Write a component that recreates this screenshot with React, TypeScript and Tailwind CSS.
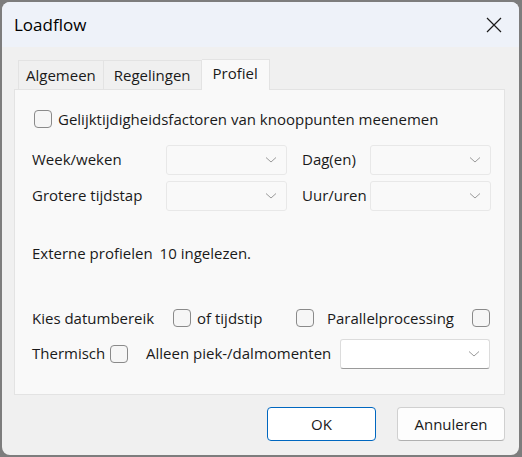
function Chevron() {
  return (
    <svg width="12" height="8" viewBox="0 0 12 8" className="text-[#9a9a9a]">
      <path d="M1 1.5 L6 6 L11 1.5" fill="none" stroke="currentColor" strokeWidth="1" />
    </svg>
  );
}

function Select({ w, white }: { w: string; white?: boolean }) {
  return (
    <div
      className={`${w} h-[30px] flex items-center justify-end pr-[9px] rounded-[3px] border ${
        white ? "bg-white border-[#dcdcdc] border-b-[#9a9a9a]" : "bg-[#f9f9f9] border-[#e8e8e8]"
      }`}
    >
      <Chevron />
    </div>
  );
}

function Box() {
  return <div className="w-[18px] h-[18px] rounded-[4px] border border-[#8a8a8a] bg-[#f6f6f6] shrink-0" />;
}

export default function App() {
  return (
    <div className="w-[522px] h-[457px] bg-[#7d7d7d] p-[2px] text-[15px] text-[#1a1a1a] font-['Segoe_UI','Open_Sans',sans-serif]">
      <div className="w-[517px] h-[453px] rounded-[8px] overflow-hidden bg-[#f0f0f0] flex flex-col">
        <div className="h-[45px] bg-[#eef2f9] flex items-center justify-between pl-[12px] pr-[17px]">
          <span className="text-[17px] text-black">Loadflow</span>
          <svg width="16" height="16" viewBox="0 0 16 16">
            <path d="M1 1 L15 15 M15 1 L1 15" stroke="#1a1a1a" strokeWidth="1.2" />
          </svg>
        </div>

        <div className="pl-[12px] pt-[12px] flex items-end">
          <div className="ml-[4px] h-[29px] px-[7px] flex items-center border border-b-0 border-[#e3e3e3] bg-[#f0f0f0]">Algemeen</div>
          <div className="h-[29px] px-[10px] flex items-center border border-b-0 border-l-0 border-[#e3e3e3] bg-[#f0f0f0]">Regelingen</div>
          <div className="h-[31px] px-[11px] pb-[3px] flex items-center border border-b-0 border-l-0 border-[#e3e3e3] bg-[#f9f9f9] -mb-px relative z-10">Profiel</div>
        </div>

        <div className="ml-[12px] w-[491px] h-[306px] border border-[#e3e3e3] bg-[#f9f9f9] pl-[17px] pt-[18px]">
          <div className="flex items-center gap-[6px] ml-[2px]">
            <Box />
            <span>Gelijktijdigheidsfactoren van knooppunten meenemen</span>
          </div>

          <div className="mt-[14px] flex items-center">
            <span className="w-[134px]">Week/weken</span>
            <Select w="w-[121px]" />
            <span className="ml-[15px] w-[68px]">Dag(en)</span>
            <Select w="w-[121px]" />
          </div>
          <div className="mt-[6px] flex items-center">
            <span className="w-[134px]">Grotere tijdstap</span>
            <Select w="w-[121px]" />
            <span className="ml-[15px] w-[68px]">Uur/uren</span>
            <Select w="w-[121px]" />
          </div>

          <div className="mt-[31px] flex items-center">
            <span>Externe profielen</span>
            <span className="ml-[7px]">10 ingelezen.</span>
          </div>

          <div className="mt-[43px] flex items-center">
            <span className="w-[141px]">Kies datumbereik</span>
            <Box />
            <span className="ml-[6px] w-[99px]">of tijdstip</span>
            <Box />
            <span className="ml-[13px] w-[145px]">Parallelprocessing</span>
            <Box />
          </div>

          <div className="mt-[9px] flex items-center">
            <span className="w-[78px]">Thermisch</span>
            <Box />
            <span className="ml-[18px] w-[194px]">Alleen piek-/dalmomenten</span>
            <Select w="w-[150px]" white />
          </div>
        </div>

        <div className="flex justify-end gap-[21px] pr-[14px] pt-[12px]">
          <div className="w-[109px] h-[34px] rounded-[4px] border border-[#0067c0] bg-white flex items-center justify-center">OK</div>
          <div className="w-[108px] h-[34px] rounded-[4px] border border-[#d0d0d0] border-b-[#b0b0b0] bg-[#fdfdfd] flex items-center justify-center">Annuleren</div>
        </div>
      </div>
    </div>
  );
}
